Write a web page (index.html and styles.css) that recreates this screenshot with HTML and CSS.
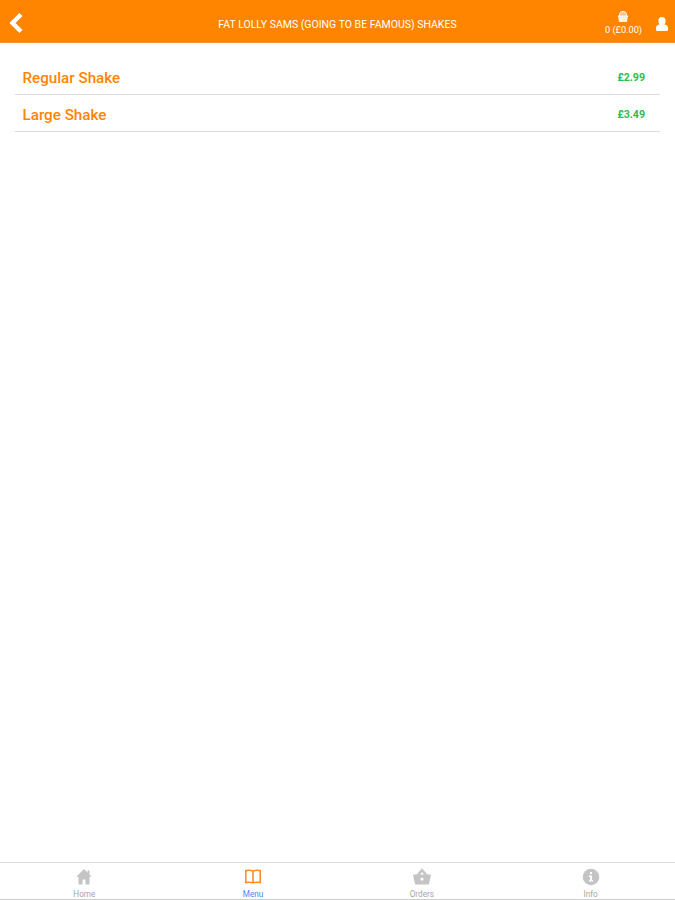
FILE: index.html
```html
<!DOCTYPE html>
<html lang="en">
<head>
    <meta charset="utf-8">
    <title>Shakes</title>
    <link rel="stylesheet" href="styles.css">
</head>
<body>
<header class="navbar">
    <a class="back">
        <svg width="14" height="22" viewBox="0 0 14 22"><path d="M12 2.500 3.500 11l8.500 8.500" fill="none" stroke="#fff" stroke-width="4.500"/></svg>
    </a>
    <h1 class="title">FAT LOLLY SAMS (GOING TO BE FAMOUS) SHAKES</h1>
    <div class="actions">
        <a class="basket">
            <svg width="12" height="12" viewBox="0 0 12 12">
                <path d="M2.500 5V3.500a3.500 3 0 0 1 7 0V5" fill="#fff" fill-opacity=".5" stroke="#fff" stroke-width="1"/>
                <path d="M.8 4.500h10.400v1.600h-.5l-.7 4.900H2l-.7-4.900H.8z" fill="#fff" fill-opacity=".88"/>
            </svg>
            <span>0 (£0.00)</span>
        </a>
        <a class="user">
            <svg width="12" height="14" viewBox="0 0 12 14">
                <ellipse cx="6" cy="4" rx="3.600" ry="4" fill="#fff"/>
                <path d="M4 6.500h4v.8c2.500.5 4 1.500 4 3.500V13q0 1-1 1H1q-1 0-1-1v-2.200c0-2 1.500-3 4-3.500z" fill="#fff"/>
            </svg>
        </a>
    </div>
</header>

<main class="content">
    <ul class="list">
        <li class="item"><span class="name">Regular Shake</span><span class="price">£2.99</span></li>
        <li class="item"><span class="name">Large Shake</span><span class="price">£3.49</span></li>
    </ul>
</main>

<nav class="tabs">
    <a class="tab">
        <svg width="20" height="20" viewBox="0 0 20 20"><path d="M10 2 2.300 9.800h2.200V17.500h4v-5h3v5h4V9.800h2.200L15.500 7.500V3.500h-2v2z" fill="currentColor"/></svg>
        <span>Home</span>
    </a>
    <a class="tab active">
        <svg width="20" height="20" viewBox="0 0 20 20"><path d="M10 4.200c-1.500-1-4.500-1-7.200-.6v11.900c2.700-.4 5.700-.3 7.200.4 1.500-.7 4.500-.8 7.200-.4V3.600C14.500 3.200 11.500 3.200 10 4.200zv11.500" fill="none" stroke="#ff8f2b" stroke-width="1.600"/></svg>
        <span>Menu</span>
    </a>
    <a class="tab">
        <svg width="20" height="20" viewBox="0 0 20 20">
            <path d="M5.500 8.500 10 3.200l4.500 5.300" fill="none" stroke="currentColor" stroke-width="2.400"/>
            <path fill-rule="evenodd" d="M1.300 7.600h17.400v2L16.800 17.500H3.200L1.300 9.600zM10 10.500a1.600 1.600 0 1 0 0 3.200 1.600 1.600 0 0 0 0-3.200z" fill="currentColor"/>
        </svg>
        <span>Orders</span>
    </a>
    <a class="tab">
        <svg width="20" height="20" viewBox="0 0 20 20">
            <circle cx="10" cy="10" r="8.300" fill="currentColor"/>
            <path d="M9 5h2v2H9zM8 8.500h3V13h1v1.400H8V13h1v-3H8z" fill="#fff"/>
        </svg>
        <span>Info</span>
    </a>
</nav>
</body>
</html>
```

FILE: styles.css
```css
* {
  box-sizing: border-box;
}
body {
  margin: 0;
  height: 900px;
  display: flex;
  flex-direction: column;
  background: #fff;
  font-family: Roboto, "Liberation Sans", sans-serif;
}
svg {
  display: block;
}
.navbar {
  display: grid;
  grid-template-columns: 100px 1fr 100px;
  align-items: center;
  height: 43px;
  padding-top: 3px;
  background: #ff8400;
  border-bottom: 1px solid #f59235;
  color: #fff;
}
.back {
  padding-left: 9px;
}
.title {
  margin: 0;
  padding-top: 4px;
  font-size: 10.5px;
  font-weight: 400;
  line-height: 14px;
  text-align: center;
  white-space: nowrap;
}
.actions {
  display: flex;
  justify-content: flex-end;
  align-items: center;
  gap: 14px;
  padding-right: 7px;
}
.basket {
  display: flex;
  flex-direction: column;
  align-items: center;
  padding-top: 1px;
  font-size: 9.2px;
  line-height: 13px;
  white-space: nowrap;
}
.user {
  padding-top: 2px;
}
.content {
  flex: 1;
  padding: 15px 15px 0;
}
.list {
  margin: 0;
  padding: 0;
  list-style: none;
}
.item {
  display: flex;
  justify-content: space-between;
  align-items: center;
  height: 37px;
  padding: 3px 15px 0 7.5px;
  border-bottom: 1px solid #dedede;
}
.name {
  color: #ff8400;
  font-size: 15.2px;
  font-weight: 500;
}
.price {
  color: #28bd50;
  font-size: 10.6px;
  font-weight: 700;
}
.tabs {
  display: grid;
  grid-template-columns: repeat(4, 1fr);
  height: 38px;
  border-top: 1px solid #dcdcdc;
  border-bottom: 1px solid #cfcfcf;
}
.tab {
  display: flex;
  flex-direction: column;
  align-items: center;
  padding-top: 4px;
  color: #c4c4c4;
  font-size: 8.2px;
  line-height: 14px;
}
.tab span {
  color: #a6a6a6;
}
.active span {
  color: #4a87f5;
}
```
